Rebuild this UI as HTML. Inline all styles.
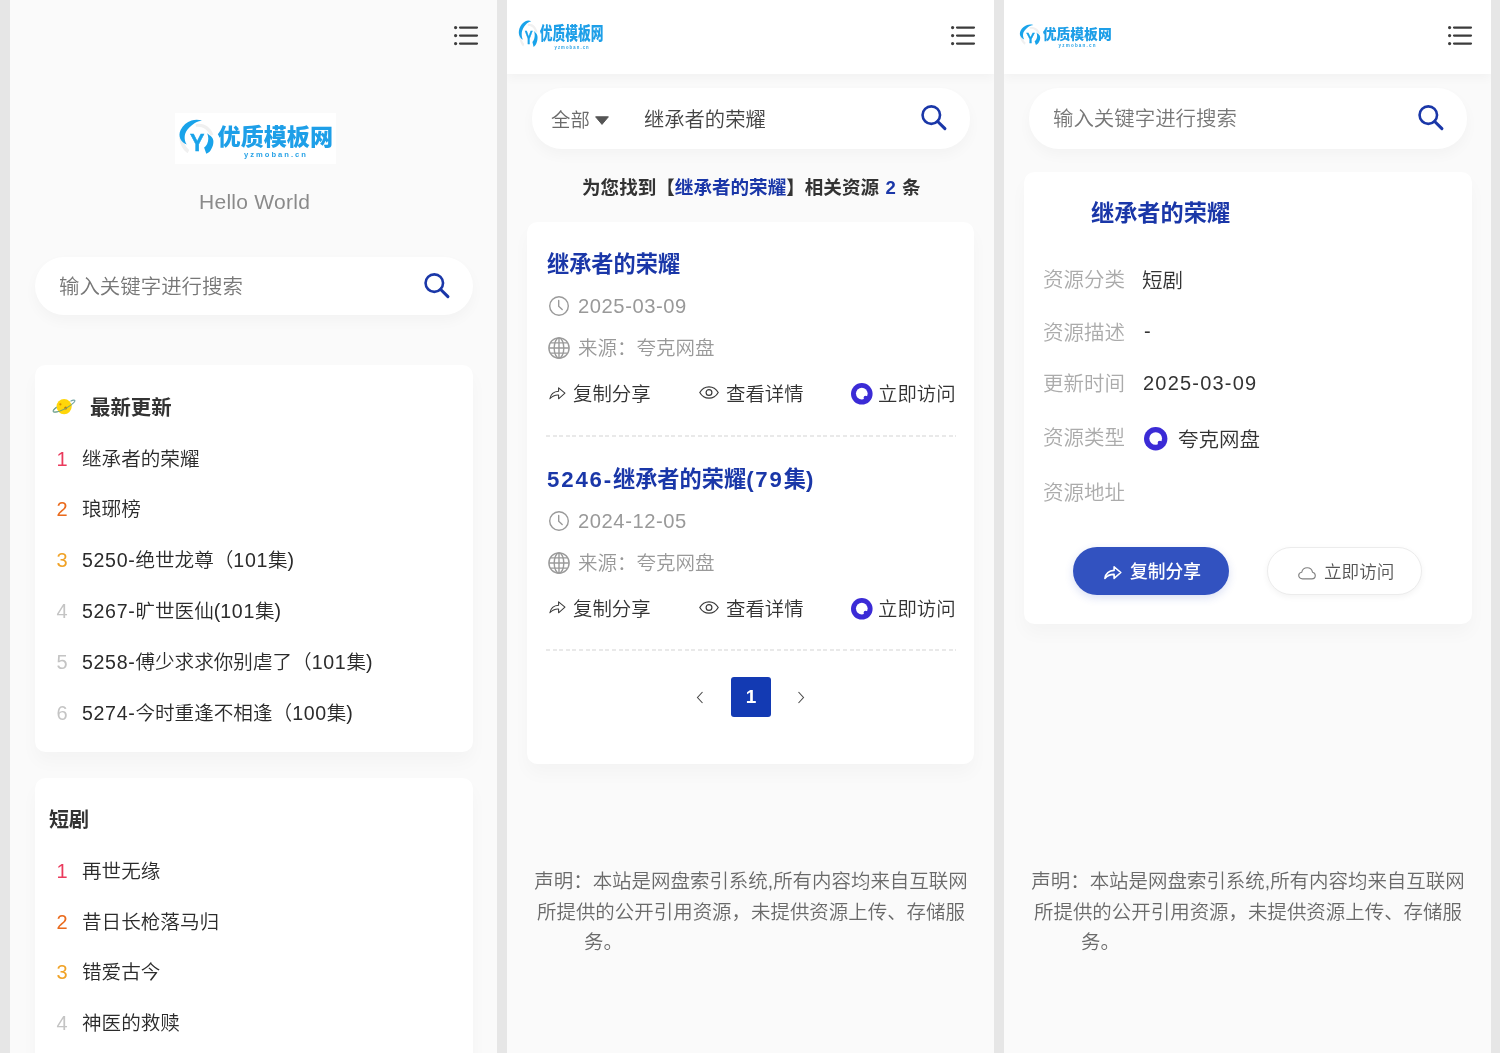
<!DOCTYPE html><html lang="zh-CN"><head><meta charset="utf-8"><title>优质模板网</title><style>
*{box-sizing:border-box;margin:0;padding:0}
html,body{width:1500px;height:1053px;overflow:hidden}
body{position:relative;background:#e6e6e6;font-family:"Liberation Sans","Noto Sans CJK SC",sans-serif;color:#333;font-weight:350}
.abs,.t,.panel,.card,.pill,.hdr{position:absolute}
.panel{top:0;height:1053px;width:487px;background:#fafafa;overflow:hidden}
.hdr{top:0;height:73.5px;width:487px;background:#fff;box-shadow:0 4px 10px rgba(0,0,0,.035)}
.card{background:#fff;border-radius:10.5px;box-shadow:0 10px 18px rgba(0,0,0,.028)}
.pill{background:#fff;border-radius:30px;box-shadow:0 6px 14px rgba(0,0,0,.03)}
.t{white-space:nowrap;line-height:30px;height:30px;will-change:transform}
.b{font-weight:700}
.ph{color:#777;font-size:20.45px}
.num{font-size:20px;width:20px;text-align:center}
.li{font-size:19.6px;color:#2b2b2b}
.blue{color:#1a37a8}
.g9{color:#999}
.lab{color:#ababab;font-size:20.5px}
.val{color:#333;font-size:20px}
.foot{color:#6a6a6a;font-size:19.47px}
.act{font-size:19.4px;color:#333}
.dash{position:absolute;height:2px;background:repeating-linear-gradient(90deg,#e9e9e9 0 4px,transparent 4px 6.6px)}
svg{position:absolute;overflow:visible;will-change:transform}
</style></head><body>
<div class="panel" style="left:10px"></div>
<div class="panel" style="left:507px"><div class="hdr" style="left:0"></div></div>
<div class="panel" style="left:1004px"><div class="hdr" style="left:0"></div></div>
<svg style="left:454.3px;top:24px" width="26" height="24" viewBox="0 0 26 24"><g stroke="#3c3c3c" stroke-width="2.2" stroke-linecap="round"><path d="M6 3.6H23M6 11.6H23M6 19.6H23"/></g><g fill="#3c3c3c"><circle cx="1.6" cy="3.6" r="1.6"/><circle cx="1.6" cy="11.6" r="1.6"/><circle cx="1.6" cy="19.6" r="1.6"/></g></svg>
<div class="abs" style="left:175px;top:113px;width:161px;height:51px;background:#fff"></div>
<svg style="left:178.00px;top:119.00px" width="156.00" height="41.00" viewBox="178 119 156 41" preserveAspectRatio="none">
<path d="M179.3 138 C180.2 145.5 183.6 150.6 187.6 153.2 L189.2 150 C185.6 146.6 183.2 142.4 182.8 138 Z" fill="#f0f0f0"/>
<path d="M195.5 124.2 C203.5 122.4 211 127 213.4 135 L210.2 135.4 C207.6 129.6 202.4 126.2 196 126.8 Z" fill="#f0f0f0"/>
<path d="M202 120.5 C198 119.4 194.5 119.6 191.5 120.6 C186.8 122.2 183 125.5 180.6 130 C179 133.4 179.2 136.4 180.4 139 C181.6 141.4 183.8 143.2 186.7 144.6 C185.4 142.4 184.8 140.4 184.7 138.4 C184.6 136.4 184.9 134.6 185.4 133.2 C186.4 130.8 187.8 129 189.3 127.5 C191 125.8 192.8 124.4 194.5 123.2 C196.8 121.8 199.4 120.9 202 120.5 Z" fill="#19a3ea"/>
<path d="M207.2 133.2 C208.8 134.8 210.2 135.6 211.2 136.4 C212.8 138 213.5 139.8 213.4 141.8 C213.3 143.6 213.2 144.6 212.8 145.8 C212 148 211 150 209.8 151.4 C208.8 152.4 207.6 153.2 206.3 153.8 L204.1 147.4 C205.6 146.4 206.6 145.2 207.2 143.7 C207.9 142 208.3 140.2 208.3 138.4 C208.2 136.6 207.8 134.8 207.2 133.2 Z" fill="#19a3ea"/>
<text x="197.25" y="150.7" text-anchor="middle" font-family="Liberation Sans, sans-serif" font-weight="700" font-size="24.6" fill="#19a3ea" stroke="#19a3ea" stroke-width="0.5" textLength="14.4" lengthAdjust="spacingAndGlyphs">Y</text>
<text x="217.6" y="144.6" font-family="Liberation Sans, Noto Sans CJK SC, sans-serif" font-weight="900" font-size="23" fill="#1e9fe8" textLength="115.4" lengthAdjust="spacingAndGlyphs">优质模板网</text>
<text x="244" y="157" font-family="Liberation Sans, sans-serif" font-weight="700" font-size="7.6" fill="#2aa3e6" textLength="62" lengthAdjust="spacing">yzmoban.cn</text>
</svg>
<div class="t " style="left:199.2px;top:187.0px;font-size:21px;color:#8a8a8a;letter-spacing:.27px;">Hello World</div>
<div class="pill" style="left:35px;top:256.7px;width:438.3px;height:58.8px"></div>
<div class="t ph" style="left:59.0px;top:272.2px;">输入关键字进行搜索</div>
<svg style="left:422.6px;top:273.0px" width="26" height="25" viewBox="0 0 26 25"><circle cx="11.3" cy="10.1" r="8.75" fill="none" stroke="#1a37a8" stroke-width="2.6"/><path d="M17.7 16.5L24.9 23.6" stroke="#1a37a8" stroke-width="3.1" stroke-linecap="round"/></svg>
<div class="card" style="left:35px;top:365px;width:438px;height:387px"></div>
<svg style="left:50px;top:396px" width="28" height="22" viewBox="50 396 28 22"><path d="M70.5 401.2 C73.2 400 74.8 399.8 74.9 400.7 C75 401.7 72.6 403.8 69.6 405.8" fill="none" stroke="#74a6a4" stroke-width="1.1"/><circle cx="64.1" cy="406.6" r="7.6" fill="#ffd60a"/><circle cx="60.4" cy="404.3" r="1.1" fill="#d98a00"/><circle cx="65.7" cy="408" r="1.5" fill="#c97400"/><path d="M56.6 407.2 C54.2 409 52.9 410.6 53.3 411.4 C53.8 412.3 56 412.3 59.5 411.3 C63.5 410 67.5 407.7 71.6 404.6" fill="none" stroke="#7fa66a" stroke-width="1.1"/><path d="M56.6 407.2 C54.2 409 52.9 410.6 53.3 411.4 C53.8 412.3 56 412.3 58.6 411.5" fill="none" stroke="#74a6a4" stroke-width="1.1"/></svg>
<div class="t b" style="left:90.3px;top:393.0px;font-size:20.4px;color:#333;">最新更新</div>
<div class="t num" style="left:51.5px;top:443.5px;color:#ea3a5c;">1</div>
<div class="t li" style="left:81.5px;top:443.5px;">继承者的荣耀</div>
<div class="t num" style="left:51.5px;top:494.4px;color:#ea6a1c;">2</div>
<div class="t li" style="left:81.5px;top:494.4px;">琅琊榜</div>
<div class="t num" style="left:51.5px;top:545.2px;color:#f0a226;">3</div>
<div class="t li" style="left:81.5px;top:545.2px;"><span style="letter-spacing:0.65px">5250-</span>绝世龙尊（<span style="letter-spacing:0.65px">101</span>集)</div>
<div class="t num" style="left:51.5px;top:596.0px;color:#c4c4c4;">4</div>
<div class="t li" style="left:81.5px;top:596.0px;"><span style="letter-spacing:0.65px">5267-</span>旷世医仙(<span style="letter-spacing:0.65px">101</span>集)</div>
<div class="t num" style="left:51.5px;top:646.9px;color:#c4c4c4;">5</div>
<div class="t li" style="left:81.5px;top:646.9px;"><span style="letter-spacing:0.65px">5258-</span>傅少求求你别虐了（<span style="letter-spacing:0.65px">101</span>集)</div>
<div class="t num" style="left:51.5px;top:697.8px;color:#c4c4c4;">6</div>
<div class="t li" style="left:81.5px;top:697.8px;"><span style="letter-spacing:0.65px">5274-</span>今时重逢不相逢（<span style="letter-spacing:0.65px">100</span>集)</div>
<div class="card" style="left:35px;top:778px;width:438px;height:341px"></div>
<div class="t b" style="left:49.0px;top:804.7px;font-size:20px;color:#333;">短剧</div>
<div class="t num" style="left:51.5px;top:856.0px;color:#ea3a5c;">1</div>
<div class="t li" style="left:81.5px;top:856.0px;">再世无缘</div>
<div class="t num" style="left:51.5px;top:906.6px;color:#ea6a1c;">2</div>
<div class="t li" style="left:81.5px;top:906.6px;">昔日长枪落马归</div>
<div class="t num" style="left:51.5px;top:957.2px;color:#f0a226;">3</div>
<div class="t li" style="left:81.5px;top:957.2px;">错爱古今</div>
<div class="t num" style="left:51.5px;top:1007.8px;color:#c4c4c4;">4</div>
<div class="t li" style="left:81.5px;top:1007.8px;">神医的救赎</div>
<svg style="left:518.40px;top:20.20px" width="86.17" height="31.70" viewBox="178 119 156 41" preserveAspectRatio="none">
<path d="M179.3 138 C180.2 145.5 183.6 150.6 187.6 153.2 L189.2 150 C185.6 146.6 183.2 142.4 182.8 138 Z" fill="#f0f0f0"/>
<path d="M195.5 124.2 C203.5 122.4 211 127 213.4 135 L210.2 135.4 C207.6 129.6 202.4 126.2 196 126.8 Z" fill="#f0f0f0"/>
<path d="M202 120.5 C198 119.4 194.5 119.6 191.5 120.6 C186.8 122.2 183 125.5 180.6 130 C179 133.4 179.2 136.4 180.4 139 C181.6 141.4 183.8 143.2 186.7 144.6 C185.4 142.4 184.8 140.4 184.7 138.4 C184.6 136.4 184.9 134.6 185.4 133.2 C186.4 130.8 187.8 129 189.3 127.5 C191 125.8 192.8 124.4 194.5 123.2 C196.8 121.8 199.4 120.9 202 120.5 Z" fill="#19a3ea"/>
<path d="M207.2 133.2 C208.8 134.8 210.2 135.6 211.2 136.4 C212.8 138 213.5 139.8 213.4 141.8 C213.3 143.6 213.2 144.6 212.8 145.8 C212 148 211 150 209.8 151.4 C208.8 152.4 207.6 153.2 206.3 153.8 L204.1 147.4 C205.6 146.4 206.6 145.2 207.2 143.7 C207.9 142 208.3 140.2 208.3 138.4 C208.2 136.6 207.8 134.8 207.2 133.2 Z" fill="#19a3ea"/>
<text x="197.25" y="150.7" text-anchor="middle" font-family="Liberation Sans, sans-serif" font-weight="700" font-size="24.6" fill="#19a3ea" stroke="#19a3ea" stroke-width="0.5" textLength="14.4" lengthAdjust="spacingAndGlyphs">Y</text>
<text x="217.6" y="144.6" font-family="Liberation Sans, Noto Sans CJK SC, sans-serif" font-weight="900" font-size="23" fill="#1e9fe8" textLength="115.4" lengthAdjust="spacingAndGlyphs">优质模板网</text>
<text x="244" y="157" font-family="Liberation Sans, sans-serif" font-weight="700" font-size="7.6" fill="#2aa3e6" textLength="62" lengthAdjust="spacing">yzmoban.cn</text>
</svg>
<svg style="left:951.2px;top:24px" width="26" height="24" viewBox="0 0 26 24"><g stroke="#3c3c3c" stroke-width="2.2" stroke-linecap="round"><path d="M6 3.6H23M6 11.6H23M6 19.6H23"/></g><g fill="#3c3c3c"><circle cx="1.6" cy="3.6" r="1.6"/><circle cx="1.6" cy="11.6" r="1.6"/><circle cx="1.6" cy="19.6" r="1.6"/></g></svg>
<div class="pill" style="left:532px;top:88px;width:438px;height:60.6px"></div>
<div class="t " style="left:551.2px;top:104.8px;font-size:19.4px;color:#6a6a6a;">全部</div>
<svg style="left:595px;top:115.5px" width="14" height="9" viewBox="0 0 14 9"><path d="M0.6 0.8H13.4L7 8.4Z" fill="#555" stroke="#555" stroke-width="1" stroke-linejoin="round"/></svg>
<div class="t " style="left:643.7px;top:105.0px;font-size:20.3px;color:#444;">继承者的荣耀</div>
<svg style="left:920.3px;top:104.8px" width="26" height="25" viewBox="0 0 26 25"><circle cx="11.3" cy="10.1" r="8.75" fill="none" stroke="#1a37a8" stroke-width="2.6"/><path d="M17.7 16.5L24.9 23.6" stroke="#1a37a8" stroke-width="3.1" stroke-linecap="round"/></svg>
<div class="t b" style="left:582.0px;top:172.5px;font-size:18.57px;color:#333;">为您找到【<span class="blue">继承者的荣耀</span>】相关资源 <span class="blue" style="margin:0 1.2px">2</span> 条</div>
<div class="card" style="left:527px;top:222px;width:447px;height:542px"></div>
<div class="t b blue" style="left:546.7px;top:250.0px;font-size:22.2px;">继承者的荣耀</div>
<svg style="left:547.5px;top:294.8px" width="22" height="22" viewBox="0 0 22 22"><circle cx="11" cy="11" r="9.3" fill="none" stroke="#9a9a9a" stroke-width="1.4"/><path d="M10.7 5.5V11.3L14.2 14.6" fill="none" stroke="#9a9a9a" stroke-width="1.4" stroke-linecap="round"/></svg>
<div class="t g9" style="left:577.5px;top:291.4px;font-size:20.2px;letter-spacing:.56px;">2025-03-09</div>
<svg style="left:547.0px;top:336.3px" width="24" height="24" viewBox="0 0 24 24"><g fill="none" stroke="#9a9a9a" stroke-width="1.4"><circle cx="12" cy="12" r="10.1"/><ellipse cx="12" cy="12" rx="4.8" ry="10.1"/><path d="M12 1.9V22.1M1.9 12H22.1M3.4 6.9H20.6M3.4 17.1H20.6"/></g></svg>
<div class="t g9" style="left:577.5px;top:333.0px;font-size:19.5px;">来源：夸克网盘</div>
<svg style="left:548.50px;top:386.58px" width="17.10" height="13.30" viewBox="0 0 18 14"><path d="M10.1 0.9L16.8 6.5L10.1 12.4V8.4C6.2 8.2 3.4 9.6 0.9 12.4C1.7 7.8 4.6 4.7 10.1 4.4Z" fill="none" stroke="#3a3a3a" stroke-width="1.10" stroke-linejoin="round"/></svg>
<div class="t act" style="left:573.0px;top:379.0px;">复制分享</div>
<svg style="left:699.0px;top:386.2px" width="20" height="13" viewBox="0 0 20 13"><path d="M0.8 6.5C3 2.6 6.2 0.8 10 0.8S17 2.6 19.2 6.5C17 10.4 13.8 12.2 10 12.2S3 10.4 0.8 6.5Z" fill="none" stroke="#3a3a3a" stroke-width="1.2"/><circle cx="10" cy="6.5" r="2.9" fill="none" stroke="#3a3a3a" stroke-width="1.2"/></svg>
<div class="t act" style="left:725.5px;top:379.0px;">查看详情</div>
<svg style="left:851.4px;top:382.8px" width="21.6" height="21.6" viewBox="0 0 24 24"><circle cx="12" cy="12" r="12" fill="#3b2bd6"/><circle cx="12" cy="11.8" r="6.5" fill="#fff"/><path d="M13.5 17.8C15.6 17.4 17 16.4 17.6 14.6L19.5 18.5L15.5 20Z" fill="#3b2bd6"/><circle cx="16.3" cy="16.4" r="2.3" fill="#3b2bd6"/></svg>
<div class="t act" style="left:878.0px;top:379.0px;">立即访问</div>
<div class="dash" style="left:546px;top:434.7px;width:410px"></div>
<div class="t b blue" style="left:546.7px;top:464.7px;font-size:22.2px;"><span style="letter-spacing:1.85px">5246-</span>继承者的荣耀<span style="letter-spacing:1.85px">(79</span>集<span style="letter-spacing:1.85px">)</span></div>
<svg style="left:547.5px;top:509.5px" width="22" height="22" viewBox="0 0 22 22"><circle cx="11" cy="11" r="9.3" fill="none" stroke="#9a9a9a" stroke-width="1.4"/><path d="M10.7 5.5V11.3L14.2 14.6" fill="none" stroke="#9a9a9a" stroke-width="1.4" stroke-linecap="round"/></svg>
<div class="t g9" style="left:577.5px;top:506.1px;font-size:20.2px;letter-spacing:.56px;">2024-12-05</div>
<svg style="left:547.0px;top:551.0px" width="24" height="24" viewBox="0 0 24 24"><g fill="none" stroke="#9a9a9a" stroke-width="1.4"><circle cx="12" cy="12" r="10.1"/><ellipse cx="12" cy="12" rx="4.8" ry="10.1"/><path d="M12 1.9V22.1M1.9 12H22.1M3.4 6.9H20.6M3.4 17.1H20.6"/></g></svg>
<div class="t g9" style="left:577.5px;top:547.7px;font-size:19.5px;">来源：夸克网盘</div>
<svg style="left:548.50px;top:601.28px" width="17.10" height="13.30" viewBox="0 0 18 14"><path d="M10.1 0.9L16.8 6.5L10.1 12.4V8.4C6.2 8.2 3.4 9.6 0.9 12.4C1.7 7.8 4.6 4.7 10.1 4.4Z" fill="none" stroke="#3a3a3a" stroke-width="1.10" stroke-linejoin="round"/></svg>
<div class="t act" style="left:573.0px;top:593.7px;">复制分享</div>
<svg style="left:699.0px;top:600.9px" width="20" height="13" viewBox="0 0 20 13"><path d="M0.8 6.5C3 2.6 6.2 0.8 10 0.8S17 2.6 19.2 6.5C17 10.4 13.8 12.2 10 12.2S3 10.4 0.8 6.5Z" fill="none" stroke="#3a3a3a" stroke-width="1.2"/><circle cx="10" cy="6.5" r="2.9" fill="none" stroke="#3a3a3a" stroke-width="1.2"/></svg>
<div class="t act" style="left:725.5px;top:593.7px;">查看详情</div>
<svg style="left:851.4px;top:597.5px" width="21.6" height="21.6" viewBox="0 0 24 24"><circle cx="12" cy="12" r="12" fill="#3b2bd6"/><circle cx="12" cy="11.8" r="6.5" fill="#fff"/><path d="M13.5 17.8C15.6 17.4 17 16.4 17.6 14.6L19.5 18.5L15.5 20Z" fill="#3b2bd6"/><circle cx="16.3" cy="16.4" r="2.3" fill="#3b2bd6"/></svg>
<div class="t act" style="left:878.0px;top:593.7px;">立即访问</div>
<div class="dash" style="left:546px;top:649.4px;width:410px"></div>
<svg style="left:695px;top:690px" width="10" height="15" viewBox="0 0 10 15"><path d="M7.5 2L2.5 7.5L7.5 13" fill="none" stroke="#4a4a4a" stroke-width="1.1"/></svg>
<div class="abs" style="left:730.6px;top:677.3px;width:40px;height:40px;border-radius:3px;background:#133ab3"></div>
<div class="t b" style="left:730.6px;top:682.3px;width:40px;text-align:center;color:#fff;font-size:19px;">1</div>
<svg style="left:795.5px;top:690px" width="10" height="15" viewBox="0 0 10 15"><path d="M2.5 2L7.5 7.5L2.5 13" fill="none" stroke="#4a4a4a" stroke-width="1.1"/></svg>
<div class="t foot" style="left:500.5px;top:866.2px;width:500px;text-align:center;">声明：本站是网盘索引系统,所有内容均来自互联网</div>
<div class="t foot" style="left:500.5px;top:896.8px;width:500px;text-align:center;">所提供的公开引用资源，未提供资源上传、存储服</div>
<div class="t foot" style="left:584.3px;top:927.4px;">务。</div>
<svg style="left:1019.40px;top:24.20px" width="93.33" height="24.82" viewBox="178 119 156 41" preserveAspectRatio="none">
<path d="M179.3 138 C180.2 145.5 183.6 150.6 187.6 153.2 L189.2 150 C185.6 146.6 183.2 142.4 182.8 138 Z" fill="#f0f0f0"/>
<path d="M195.5 124.2 C203.5 122.4 211 127 213.4 135 L210.2 135.4 C207.6 129.6 202.4 126.2 196 126.8 Z" fill="#f0f0f0"/>
<path d="M202 120.5 C198 119.4 194.5 119.6 191.5 120.6 C186.8 122.2 183 125.5 180.6 130 C179 133.4 179.2 136.4 180.4 139 C181.6 141.4 183.8 143.2 186.7 144.6 C185.4 142.4 184.8 140.4 184.7 138.4 C184.6 136.4 184.9 134.6 185.4 133.2 C186.4 130.8 187.8 129 189.3 127.5 C191 125.8 192.8 124.4 194.5 123.2 C196.8 121.8 199.4 120.9 202 120.5 Z" fill="#19a3ea"/>
<path d="M207.2 133.2 C208.8 134.8 210.2 135.6 211.2 136.4 C212.8 138 213.5 139.8 213.4 141.8 C213.3 143.6 213.2 144.6 212.8 145.8 C212 148 211 150 209.8 151.4 C208.8 152.4 207.6 153.2 206.3 153.8 L204.1 147.4 C205.6 146.4 206.6 145.2 207.2 143.7 C207.9 142 208.3 140.2 208.3 138.4 C208.2 136.6 207.8 134.8 207.2 133.2 Z" fill="#19a3ea"/>
<text x="197.25" y="150.7" text-anchor="middle" font-family="Liberation Sans, sans-serif" font-weight="700" font-size="24.6" fill="#19a3ea" stroke="#19a3ea" stroke-width="0.5" textLength="14.4" lengthAdjust="spacingAndGlyphs">Y</text>
<text x="217.6" y="144.6" font-family="Liberation Sans, Noto Sans CJK SC, sans-serif" font-weight="900" font-size="23" fill="#1e9fe8" textLength="115.4" lengthAdjust="spacingAndGlyphs">优质模板网</text>
<text x="244" y="157" font-family="Liberation Sans, sans-serif" font-weight="700" font-size="7.6" fill="#2aa3e6" textLength="62" lengthAdjust="spacing">yzmoban.cn</text>
</svg>
<svg style="left:1448.2px;top:24px" width="26" height="24" viewBox="0 0 26 24"><g stroke="#3c3c3c" stroke-width="2.2" stroke-linecap="round"><path d="M6 3.6H23M6 11.6H23M6 19.6H23"/></g><g fill="#3c3c3c"><circle cx="1.6" cy="3.6" r="1.6"/><circle cx="1.6" cy="11.6" r="1.6"/><circle cx="1.6" cy="19.6" r="1.6"/></g></svg>
<div class="pill" style="left:1029px;top:88px;width:438px;height:60.6px"></div>
<div class="t ph" style="left:1052.5px;top:104.0px;">输入关键字进行搜索</div>
<svg style="left:1417.3px;top:104.8px" width="26" height="25" viewBox="0 0 26 25"><circle cx="11.3" cy="10.1" r="8.75" fill="none" stroke="#1a37a8" stroke-width="2.6"/><path d="M17.7 16.5L24.9 23.6" stroke="#1a37a8" stroke-width="3.1" stroke-linecap="round"/></svg>
<div class="card" style="left:1024px;top:172px;width:448px;height:451.5px"></div>
<div class="t b blue" style="left:1090.5px;top:198.0px;font-size:23.2px;">继承者的荣耀</div>
<div class="t lab" style="left:1042.6px;top:265.1px;">资源分类</div>
<div class="t val" style="left:1142.3px;top:265.8px;font-size:20.6px;">短剧</div>
<div class="t lab" style="left:1042.6px;top:317.5px;">资源描述</div>
<div class="t val" style="left:1143.5px;top:316.2px;">-</div>
<div class="t lab" style="left:1042.6px;top:369.3px;">更新时间</div>
<div class="t val" style="left:1142.5px;top:368.3px;letter-spacing:1.2px;">2025-03-09</div>
<div class="t lab" style="left:1042.6px;top:422.8px;">资源类型</div>
<div class="t lab" style="left:1042.6px;top:477.5px;">资源地址</div>
<svg style="left:1143.9px;top:427.1px" width="23.4" height="23.4" viewBox="0 0 24 24"><circle cx="12" cy="12" r="12" fill="#3b2bd6"/><circle cx="12" cy="11.8" r="6.5" fill="#fff"/><path d="M13.5 17.8C15.6 17.4 17 16.4 17.6 14.6L19.5 18.5L15.5 20Z" fill="#3b2bd6"/><circle cx="16.3" cy="16.4" r="2.3" fill="#3b2bd6"/></svg>
<div class="t val" style="left:1177.8px;top:424.7px;font-size:20.5px;">夸克网盘</div>
<div class="abs" style="left:1072.7px;top:547.3px;width:156.3px;height:47.7px;border-radius:24px;background:#3252c0;box-shadow:0 3px 8px rgba(50,82,192,.18)"></div>
<svg style="left:1104.00px;top:565.65px" width="18.00" height="14.00" viewBox="0 0 18 14"><path d="M10.1 0.9L16.8 6.5L10.1 12.4V8.4C6.2 8.2 3.4 9.6 0.9 12.4C1.7 7.8 4.6 4.7 10.1 4.4Z" fill="none" stroke="#fff" stroke-width="1.60" stroke-linejoin="round"/></svg>
<div class="t " style="left:1129.8px;top:557.3px;font-size:17.8px;color:#fff;font-weight:500;">复制分享</div>
<div class="abs" style="left:1266.7px;top:547.3px;width:155.6px;height:47.7px;border-radius:24px;background:#fff;border:1px solid #ececec;box-shadow:0 2px 6px rgba(0,0,0,.05)"></div>
<svg style="left:1298.0px;top:566.5px" width="18" height="12.6" viewBox="0 0 20 14"><path d="M5 13.2C2.6 13.2 0.8 11.6 0.8 9.5C0.8 7.6 2.2 6.1 4.1 5.9C4.8 2.9 7.2 0.8 10.2 0.8C13.2 0.8 15.6 2.9 16.1 5.8C18 6.1 19.2 7.6 19.2 9.5C19.2 11.6 17.5 13.2 15.4 13.2Z" fill="none" stroke="#808080" stroke-width="1.25" stroke-linejoin="round"/></svg>
<div class="t " style="left:1324.2px;top:557.3px;font-size:17.6px;color:#555;">立即访问</div>
<div class="t foot" style="left:997.5px;top:866.2px;width:500px;text-align:center;">声明：本站是网盘索引系统,所有内容均来自互联网</div>
<div class="t foot" style="left:997.5px;top:896.8px;width:500px;text-align:center;">所提供的公开引用资源，未提供资源上传、存储服</div>
<div class="t foot" style="left:1081.4px;top:927.4px;">务。</div>
</body></html>
